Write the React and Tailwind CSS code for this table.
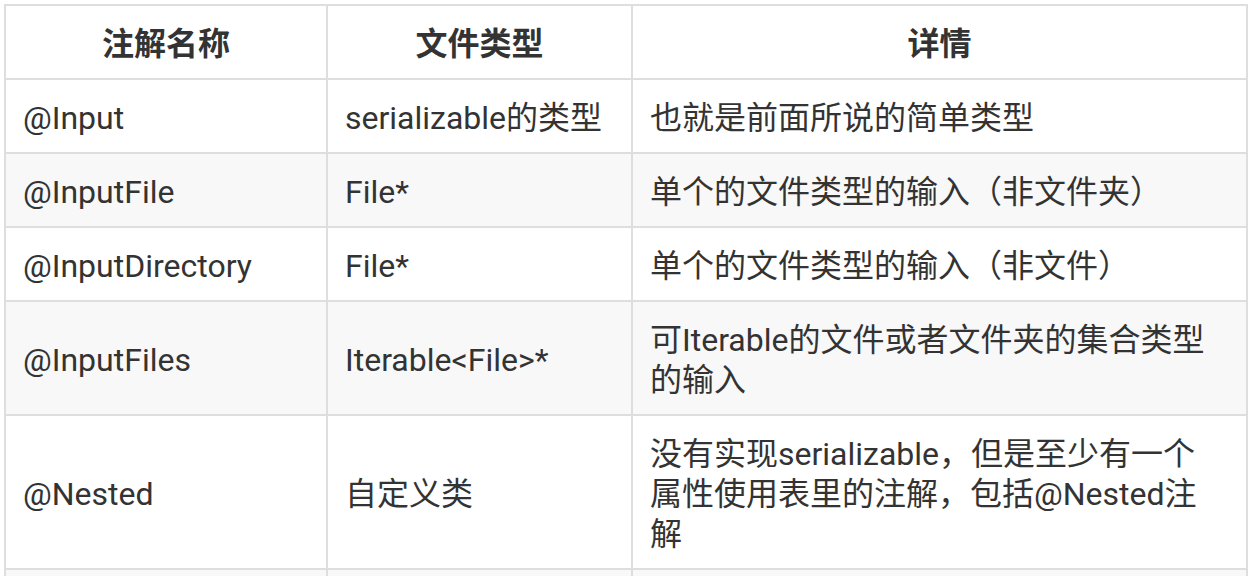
import React from "react";

const rows = [
  { name: "@Input", type: "serializable的类型", detail: ["也就是前面所说的简单类型"] },
  { name: "@InputFile", type: "File*", detail: ["单个的文件类型的输入（非文件夹）"] },
  { name: "@InputDirectory", type: "File*", detail: ["单个的文件类型的输入（非文件）"] },
  {
    name: "@InputFiles",
    type: "Iterable<File>*",
    detail: ["可Iterable的文件或者文件夹的集合类型", "的输入"],
  },
  {
    name: "@Nested",
    type: "自定义类",
    detail: [
      "没有实现serializable，但是至少有一个",
      "属性使用表里的注解，包括@Nested注",
      "解",
    ],
  },
  { name: "", type: "", detail: [""] },
];

const cell = "border-r-2 border-b-2 border-[#dedede] px-[17px] pt-[18px] pb-[14px] align-middle";

export default function App() {
  return (
    <div
      className="w-[1252px] h-[576px] overflow-hidden bg-white pt-1 pl-1 text-[#333333] text-[32px] leading-[40px]"
      style={{ fontFamily: '"Roboto", "Noto Sans CJK SC", sans-serif' }}
    >
      <table className="table-fixed border-separate border-spacing-0 border-l-2 border-t-2 border-[#dedede] w-[1244px]">
        <colgroup>
          <col className="w-[322px]" />
          <col className="w-[305px]" />
          <col className="w-[615px]" />
        </colgroup>
        <thead>
          <tr className="bg-white">
            <th className={`${cell} text-center font-bold`}>注解名称</th>
            <th className={`${cell} text-center font-bold`}>文件类型</th>
            <th className={`${cell} text-center font-bold`}>详情</th>
          </tr>
        </thead>
        <tbody>
          {rows.map((r, i) => (
            <tr key={i} className={i % 2 === 1 ? "bg-[#f8f8f8]" : "bg-white"}>
              <td className={`${cell} whitespace-nowrap`}>{r.name || "\u00a0"}</td>
              <td className={`${cell} whitespace-nowrap`}>{r.type || "\u00a0"}</td>
              <td className={`${cell} whitespace-nowrap`}>
                {r.detail.map((line, j) => (
                  <React.Fragment key={j}>
                    {j > 0 && <br />}
                    {line || "\u00a0"}
                  </React.Fragment>
                ))}
              </td>
            </tr>
          ))}
        </tbody>
      </table>
    </div>
  );
}
